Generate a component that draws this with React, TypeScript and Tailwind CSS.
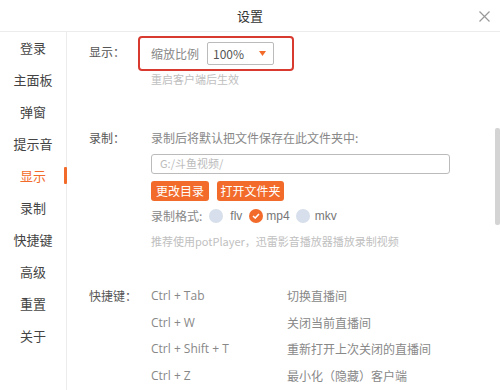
import React from "react";

const navItems = ["登录", "主面板", "弹窗", "提示音", "显示", "录制", "快捷键", "高级", "重置", "关于"];

const shortcuts: [string, string][] = [
  ["Ctrl + Tab", "切换直播间"],
  ["Ctrl + W", "关闭当前直播间"],
  ["Ctrl + Shift + T", "重新打开上次关闭的直播间"],
  ["Ctrl + Z", "最小化（隐藏）客户端"],
];

export default function App() {
  return (
    <div
      className="w-[500px] h-[390px] bg-white overflow-hidden flex flex-col relative"
      style={{ fontFamily: '"Noto Sans CJK SC", "Noto Sans", sans-serif' }}
    >
      {/* header */}
      <div className="h-[32px] shrink-0 border-b border-[#ececec] flex items-center justify-center relative">
        <span className="text-[13px] text-[#333]">设置</span>
        <svg className="absolute right-[10px] top-[11px]" width="11" height="11" viewBox="0 0 11 11">
          <path d="M0.5 0.5L10.5 10.5M10.5 0.5L0.5 10.5" stroke="#999" strokeWidth="1.2" />
        </svg>
      </div>
      <div className="flex flex-1 min-h-0">
        {/* sidebar */}
        <div className="w-[67px] shrink-0 border-r border-[#ececec] flex flex-col pt-[0px]">
          {navItems.map((n) => (
            <div key={n} className="h-[32px] flex items-center justify-center relative">
              <span className={`text-[13px] ${n === "显示" ? "text-[#f26b2a]" : "text-[#444]"}`}>{n}</span>
              {n === "显示" && (
                <div className="absolute right-[-1px] top-[7px] w-[3px] h-[17px] bg-[#f26b2a] rounded-[1px]" />
              )}
            </div>
          ))}
        </div>
        {/* content */}
        <div className="flex-1 relative text-[12px] text-[#666]">
          <div className="pl-[22px] pt-[4px] flex flex-col">
            {/* display */}
            <div className="flex">
              <div className="w-[62px] pt-[7px] text-[#555] text-[12px]">显示：</div>
              <div className="flex flex-col">
                <div className="-ml-[13px] w-[156px] h-[35px] border-[2.5px] border-[#d93a2f] rounded-[4px] flex items-center pl-[11px]">
                  <span className="text-[#888]">缩放比例</span>
                  <div className="ml-[8px] w-[67px] h-[23px] border border-[#bbb] rounded-[2px] flex items-center justify-between pl-[5px] pr-[7px]">
                    <span className="text-[#555] text-[12px]">100%</span>
                    <svg width="7" height="5" viewBox="0 0 7 5">
                      <path d="M0 0H7L3.5 5Z" fill="#f26b2a" />
                    </svg>
                  </div>
                </div>
                <div className="pt-[0px] text-[11px] text-[#c0c0c0]">重启客户端后生效</div>
              </div>
            </div>
            {/* record */}
            <div className="flex mt-[41px]">
              <div className="w-[62px] text-[#555]">录制：</div>
              <div className="flex flex-col w-[300px]">
                <div className="h-[18px] flex items-center text-[#888]">录制后将默认把文件保存在此文件夹中:</div>
                <div className="mt-[7px] w-[299px] h-[20px] border border-[#bbb] rounded-[3px] flex items-center pl-[8px] text-[#bbb] text-[11px]">
                  G:/斗鱼视频/
                </div>
                <div className="flex gap-[8px] mt-[7px]">
                  <div className="w-[58px] h-[20px] bg-[#f26b2a] rounded-[3px] text-white flex items-center justify-center">更改目录</div>
                  <div className="w-[67px] h-[20px] bg-[#f26b2a] rounded-[3px] text-white flex items-center justify-center">打开文件夹</div>
                </div>
                <div className="flex items-center mt-[6px] h-[18px]">
                  <span className="text-[#888]">录制格式:</span>
                  <span className="ml-[7px] w-[14px] h-[14px] rounded-full bg-[#d6dfeb]" />
                  <span className="ml-[7px] text-[#777]" style={{ fontFamily: '"Liberation Sans", sans-serif' }}>flv</span>
                  <span className="ml-[7px] w-[14px] h-[14px] rounded-full bg-[#f26b2a] flex items-center justify-center">
                    <svg width="8" height="6" viewBox="0 0 8 6">
                      <path d="M1 3L3.2 5L7 1" stroke="white" strokeWidth="1.6" fill="none" />
                    </svg>
                  </span>
                  <span className="ml-[3px] text-[#777]" style={{ fontFamily: '"Liberation Sans", sans-serif' }}>mp4</span>
                  <span className="ml-[6px] w-[14px] h-[14px] rounded-full bg-[#d6dfeb]" />
                  <span className="ml-[5px] text-[#777]" style={{ fontFamily: '"Liberation Sans", sans-serif' }}>mkv</span>
                </div>
                <div className="mt-[8px] text-[11px] text-[#c0c0c0]">推荐使用potPlayer，迅雷影音播放器播放录制视频</div>
              </div>
            </div>
            {/* shortcuts */}
            <div className="flex mt-[38px]">
              <div className="w-[62px] text-[#555]">快捷键：</div>
              <div className="flex flex-col gap-[8.5px]">
                {shortcuts.map(([k, d]) => (
                  <div key={k} className="flex h-[18px] items-center">
                    <span className="w-[136px] text-[#888]" style={{ fontFamily: '"Open Sans", "Noto Sans CJK SC", sans-serif' }}>{k}</span>
                    <span className="text-[#888]">{d}</span>
                  </div>
                ))}
              </div>
            </div>
          </div>
          {/* scrollbar */}
          <div className="absolute right-[0px] top-[96px] w-[5px] h-[97px] bg-[#d4d4d4] rounded-[2px]" />
        </div>
      </div>
    </div>
  );
}
